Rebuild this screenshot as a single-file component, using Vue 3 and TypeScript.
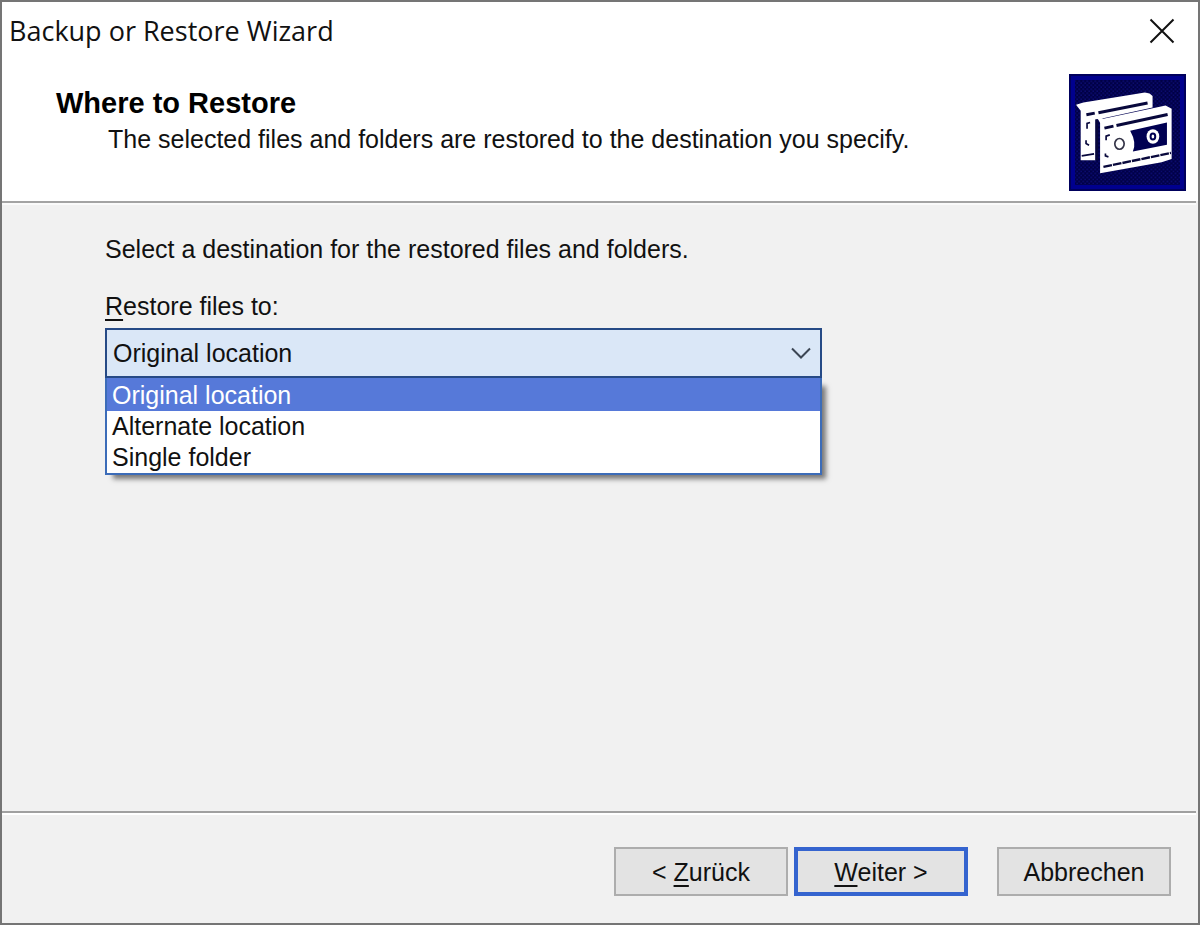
<script setup lang="ts">
import { ref } from 'vue'

const locations: string[] = ['Original location', 'Alternate location', 'Single folder']
const selected = ref<string>(locations[0])
</script>

<template>
  <main class="window">
    <header class="banner">
      <div class="titlebar">
        <span class="caption">Backup or Restore Wizard</span>
        <button class="close" type="button" aria-label="Close">
          <svg viewBox="0 0 26 26" aria-hidden="true">
            <path d="M1.5 1.5 24.5 24.5M24.5 1.5 1.5 24.5" />
          </svg>
        </button>
      </div>
      <div class="heading">
        <div class="heading-text">
          <h1>Where to Restore</h1>
          <p>The selected files and folders are restored to the destination you specify.</p>
        </div>
        <svg class="tapes" viewBox="57 42 350 350" aria-hidden="true">
          <defs>
            <pattern id="weave" width="12" height="12" patternUnits="userSpaceOnUse">
              <rect width="12" height="12" fill="#000046" />
              <rect x="1" y="1" width="5" height="5" fill="#0b0b6e" />
              <rect x="7" y="7" width="5" height="5" fill="#0b0b6e" />
            </pattern>
          </defs>
          <rect x="57" y="42" width="350" height="350" fill="#00005c" />
          <rect x="69" y="54" width="326" height="326" fill="url(#weave)" stroke="#00008e" stroke-width="12" />
          <path fill="#fff" d="M78 134 100 127 284 97 298 100 307 108V142L160 174 136 178V300H92V152Z" />
          <g fill="none" stroke="#08083c" stroke-width="9">
            <path d="M109 164 134 159M145 158 292 129" />
            <path d="M140 178V300" stroke-width="8" />
            <path d="M111 206V190L120 187M108 240V250L117 255M95 287 132 281" stroke-width="5" />
          </g>
          <path fill="#fff" d="M138 168 160 176 346 136 364 146V296L334 306 150 339V188Z" />
          <path fill="#000052" d="M240 212 350 187V254L248 274Q260 248 240 212Z" />
          <g fill="none" stroke="#08083c" stroke-width="9">
            <path d="M163 204 190 198M199 196 352 163" />
            <path d="M160 320 362 278" stroke-dasharray="26 3" stroke-width="7" />
            <path d="M168 240V228L179 224M166 280V287L175 290" stroke-width="5" />
          </g>
          <ellipse cx="208" cy="251" rx="14" ry="16" fill="#fff" stroke="#333347" stroke-width="5" />
          <ellipse cx="308" cy="229" rx="19" ry="22" fill="#fff" />
          <ellipse cx="308" cy="229" rx="7" ry="9" fill="#fff" stroke="#000052" stroke-width="6" />
        </svg>
      </div>
    </header>

    <section class="content">
      <p class="prompt">Select a destination for the restored files and folders.</p>
      <label class="field-label" for="destination"><u>R</u>estore files to:</label>
      <div class="combo">
        <select id="destination" v-model="selected">
          <option v-for="location in locations" :key="location">{{ location }}</option>
        </select>
        <svg class="chevron" viewBox="0 0 20 12" aria-hidden="true">
          <path d="M1 1.5 10 10.5 19 1.5" />
        </svg>
        <ul class="menu" role="listbox" aria-label="Restore files to">
          <li
            v-for="location in locations"
            :key="location"
            role="option"
            :aria-selected="location === selected"
            :class="{ active: location === selected }"
            @click="selected = location"
          >
            {{ location }}
          </li>
        </ul>
      </div>
    </section>

    <footer class="actions">
      <button class="action" type="button"><span>&lt; <u>Z</u>urück</span></button>
      <button class="action primary" type="button"><span><u>W</u>eiter &gt;</span></button>
      <button class="action cancel" type="button">Abbrechen</button>
    </footer>
  </main>
</template>

<style>
body {
  margin: 0;
  background: #f1f1f1;
}
</style>

<style scoped>
.window {
  box-sizing: border-box;
  min-height: 100vh;
  display: flex;
  flex-direction: column;
  border: 2px solid #757575;
  background: #f1f1f1;
  color: #111;
  font-family: "Liberation Sans", Arial, sans-serif;
  font-size: 25px;
  line-height: 32px;
}

h1,
p,
ul {
  margin: 0;
  padding: 0;
}

u {
  text-decoration-thickness: 2px;
  text-underline-offset: 4px;
}

.banner {
  background: #fff;
  padding-bottom: 10px;
}

.titlebar {
  display: flex;
  align-items: center;
  justify-content: space-between;
  height: 58px;
  padding: 0 23px 0 7px;
}

.caption {
  font-family: "Open Sans", "Noto Sans", sans-serif;
  font-size: 27px;
}

.close {
  display: flex;
  padding: 0;
  border: 0;
  background: none;
}

.close svg {
  width: 26px;
  height: 26px;
  fill: none;
  stroke: #111;
  stroke-width: 2;
}

.heading {
  display: flex;
  justify-content: space-between;
  padding: 14px 12px 0 54px;
}

.heading-text {
  padding-top: 11px;
}

.heading h1 {
  font-size: 29px;
  line-height: 36px;
  color: #000;
}

.heading p {
  padding-left: 52px;
  line-height: 36px;
}

.tapes {
  flex: none;
  width: 117px;
  height: 117px;
}

.content {
  flex: 1;
  margin-right: 2px;
  border-top: 2px solid #a3a3a3;
  box-shadow: inset 0 2px #fafafa;
  padding: 30px 102px 40px 103px;
}

.prompt {
  margin-bottom: 25px;
}

.field-label {
  display: block;
  margin-bottom: 6px;
}

.combo {
  position: relative;
  max-width: 717px;
}

.combo select {
  display: block;
  box-sizing: border-box;
  width: 100%;
  height: 50px;
  padding: 0 6px;
  border: 2px solid #264a86;
  border-radius: 0;
  outline: none;
  appearance: none;
  background: #dae7f7;
  color: #111;
  font: inherit;
}

.chevron {
  position: absolute;
  right: 11px;
  top: 19px;
  width: 20px;
  height: 12px;
  fill: none;
  stroke: #3c4654;
  stroke-width: 2;
  pointer-events: none;
}

.menu {
  position: absolute;
  top: 50px;
  left: 0;
  right: 0;
  border: 2px solid #3c6cb8;
  border-top: 0;
  background: #fff;
  box-shadow: 6px 6px 5px -2px rgba(0, 0, 0, 0.5);
  list-style: none;
}

.menu li {
  padding: 0 5px;
  line-height: 31px;
}

.menu li:first-child {
  padding-top: 2px;
}

.menu li.active {
  background: #5679d9;
  color: #fff;
}

.actions {
  display: flex;
  justify-content: flex-end;
  gap: 6px;
  margin-right: 2px;
  padding: 34px 25px 27px;
  border-top: 2px solid #a0a0a0;
  box-shadow: inset 0 2px #fff;
}

.action {
  box-sizing: border-box;
  width: 174px;
  height: 49px;
  padding: 0;
  border: 2px solid #adadad;
  background: #e3e3e3;
  color: #111;
  font: inherit;
}

.action.primary {
  border: 4px solid #3564cf;
}

.action.cancel {
  margin-left: 23px;
}
</style>
